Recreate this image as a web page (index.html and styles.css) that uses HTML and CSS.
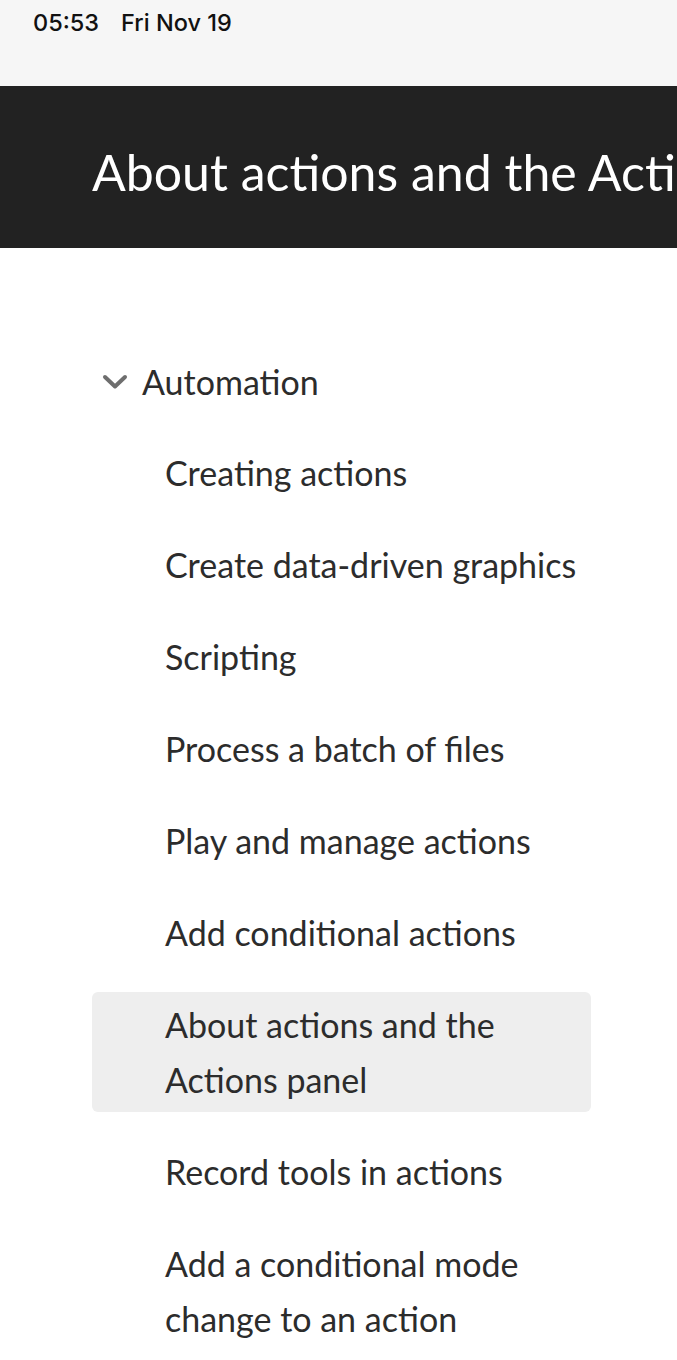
FILE: index.html
```html
<!DOCTYPE html>
<html lang="en">
<head>
<meta charset="utf-8">
<title>About actions and the Actions panel</title>
<link rel="stylesheet" href="styles.css">
</head>
<body>
<div class="status-bar">
  <span class="time">05:53</span>
  <span class="date">Fri Nov 19</span>
</div>
<header class="page-header">
  <h1 class="page-title">About actions and the Actions panel</h1>
</header>
<nav class="toc">
  <div class="toc-group">
    <svg class="chevron" viewBox="0 0 26 16" width="26" height="16" aria-hidden="true">
      <path d="M3 3 L13 12.5 L23 3" fill="none" stroke="#6e6e6e" stroke-width="4" stroke-linecap="round" stroke-linejoin="round"/>
    </svg>
    <span class="group-label">Automation</span>
  </div>
  <ul class="toc-list">
    <li class="toc-item">Creating actions</li>
    <li class="toc-item">Create data-driven graphics</li>
    <li class="toc-item">Scripting</li>
    <li class="toc-item">Process a batch of files</li>
    <li class="toc-item">Play and manage actions</li>
    <li class="toc-item">Add conditional actions</li>
    <li class="toc-item active">About actions and the Actions panel</li>
    <li class="toc-item">Record tools in actions</li>
    <li class="toc-item">Add a conditional mode change to an action</li>
  </ul>
</nav>
</body>
</html>
```

FILE: styles.css
```css
html, body {
  margin: 0;
  padding: 0;
}
body {
  background: #ffffff;
  font-family: "Lato", "Open Sans", sans-serif;
  color: #2c2c2c;
  overflow: hidden;
}
.status-bar {
  height: 86px;
  background: #f6f6f6;
  box-sizing: border-box;
  padding: 8px 0 0 33px;
  display: flex;
  gap: 22px;
  font-family: "Inter", "Roboto", sans-serif;
  font-size: 23.5px;
  font-weight: 500;
  color: #111;
  line-height: 30px;
}
.page-header {
  height: 162px;
  box-sizing: border-box;
  background: #222222;
  display: flex;
  align-items: center;
  padding: 10px 0 0 92px;
  overflow: hidden;
}
.page-title {
  margin: 0;
  font-weight: 400;
  font-size: 50px;
  color: #ffffff;
  white-space: nowrap;
  line-height: 1;
}
.toc {
  padding: 106px 86px 0 92px;
}
.toc-group {
  display: flex;
  align-items: center;
  height: 55px;
  gap: 14px;
  padding-left: 10px;
}
.chevron {
  display: block;
}
.group-label {
  font-size: 34px;
  line-height: 55px;
}
.toc-list {
  list-style: none;
  margin: 31px 0 0 0;
  padding: 0;
  display: flex;
  flex-direction: column;
  gap: 27px;
}
.toc-item {
  font-size: 34px;
  line-height: 55px;
  padding: 5px 0 5px 73px;
  border-radius: 6px;
}
.toc-item.active {
  background: #eeeeee;
}
```
